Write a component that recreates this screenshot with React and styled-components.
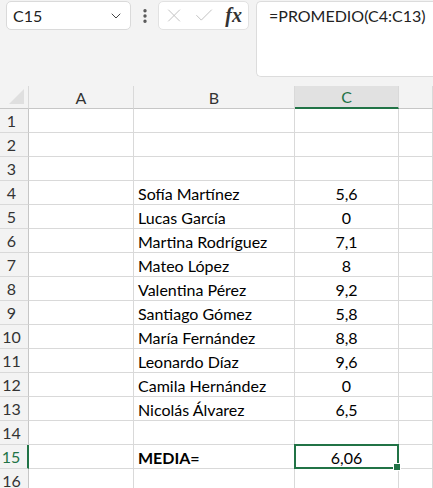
import React from "react";
import styled, { createGlobalStyle } from "styled-components";
import { ChevronDown, EllipsisVertical, X, Check } from "lucide-react";

const GlobalStyle = createGlobalStyle`
  * { box-sizing: border-box; }
  html, body { margin: 0; padding: 0; background: #f3f3f3; }
  body { font-family: Lato, "Liberation Sans", sans-serif; color: #000; }
`;

const green = "#217346";
const gridLine = "#d9d9d9";

const Page = styled.div`
  width: 433px;
  height: 488px;
  overflow: hidden;
  background: #f3f3f3;
`;

const Toolbar = styled.div`
  display: flex;
  align-items: flex-start;
  height: 86px;
  padding: 1px 0 0 6px;
`;

const NameBox = styled.div`
  display: flex;
  align-items: center;
  justify-content: space-between;
  width: 125px;
  height: 29px;
  padding: 0 6px 0 6px;
  background: #fff;
  border: 1px solid #dadada;
  border-radius: 5px;
  font-size: 16px;
  color: #222;
`;

const Dots = styled.div`
  display: flex;
  width: 27px;
  height: 29px;
  align-items: center;
  justify-content: center;
  color: #555;
`;

const ActionGroup = styled.div`
  display: flex;
  align-items: center;
  gap: 8px;
  width: 91px;
  height: 29px;
  padding: 0 6px 0 4px;
  background: #fff;
  border: 1px solid #e2e2e2;
  border-radius: 5px;
  color: #bdbdbd;
`;

const Fx = styled.span`
  margin-left: 2px;
  font-family: "Liberation Serif", serif;
  font-style: italic;
  font-weight: bold;
  font-size: 20px;
  color: #333;
`;

const FormulaBox = styled.div`
  flex: 1;
  height: 76px;
  margin-left: 7px;
  padding: 4px 0 0 12px;
  background: #fff;
  border: 1px solid #dcdcdc;
  border-right: none;
  border-radius: 5px 0 0 5px;
  font-size: 16px;
  color: #222;
`;

const Sheet = styled.div`
  display: grid;
  grid-template-columns: 29px 105px 161px 104px 1fr;
  grid-template-rows: 23px;
  grid-auto-rows: 24px;
  background: #fff;
`;

const Corner = styled.div`
  position: relative;
  background: #f3f3f3;
  border-right: 1px solid ${gridLine};
  border-bottom: 1px solid #c6c6c6;

  &::after {
    content: "";
    position: absolute;
    right: 4px;
    bottom: 4px;
    border-left: 15px solid transparent;
    border-bottom: 15px solid #dfdfdf;
  }
`;

const ColHead = styled.div`
  display: flex;
  align-items: center;
  justify-content: center;
  background: ${(p) => (p.$active ? "#e1e1e1" : "#f3f3f3")};
  color: ${(p) => (p.$active ? green : "#333")};
  border-right: 1px solid ${gridLine};
  border-bottom: ${(p) => (p.$active ? `2px solid ${green}` : "1px solid #c6c6c6")};
  font-size: 16px;
`;

const RowHead = styled.div`
  display: flex;
  align-items: center;
  justify-content: center;
  padding-right: 5px;
  background: #f3f3f3;
  color: ${(p) => (p.$active ? green : "#333")};
  border-right: ${(p) => (p.$active ? `2px solid ${green}` : "1px solid #c6c6c6")};
  border-bottom: 1px solid ${gridLine};
  font-size: 16px;
`;

const Cell = styled.div`
  position: relative;
  display: flex;
  align-items: center;
  justify-content: ${(p) => (p.$center ? "center" : "flex-start")};
  padding: 2px 4px 0;
  border-right: 1px solid ${gridLine};
  border-bottom: 1px solid ${gridLine};
  font-size: 16px;
  font-weight: ${(p) => (p.$bold ? 700 : 400)};
  white-space: nowrap;

  ${(p) =>
    p.$selected &&
    `
    &::after {
      content: "";
      position: absolute;
      left: -1px;
      top: -1px;
      right: -1px;
      bottom: -1px;
      border: 2px solid ${green};
    }
    &::before {
      content: "";
      position: absolute;
      right: -3px;
      bottom: -3px;
      width: 6px;
      height: 6px;
      background: ${green};
      border: 1px solid #fff;
      z-index: 1;
    }
  `}
`;

const rows = [
  [],
  [],
  [],
  ["Sofía Martínez", "5,6"],
  ["Lucas García", "0"],
  ["Martina Rodríguez", "7,1"],
  ["Mateo López", "8"],
  ["Valentina Pérez", "9,2"],
  ["Santiago Gómez", "5,8"],
  ["María Fernández", "8,8"],
  ["Leonardo Díaz", "9,6"],
  ["Camila Hernández", "0"],
  ["Nicolás Álvarez", "6,5"],
  [],
  ["MEDIA=", "6,06", true],
  [],
];

export default function App() {
  return (
    <Page>
      <GlobalStyle />
      <Toolbar>
        <NameBox>
          <span>C15</span>
          <ChevronDown size={16} strokeWidth={1.5} color="#444" />
        </NameBox>
        <Dots>
          <EllipsisVertical size={18} strokeWidth={2.5} />
        </Dots>
        <ActionGroup>
          <X size={25} strokeWidth={1} />
          <Check size={25} strokeWidth={1} />
          <Fx>fx</Fx>
        </ActionGroup>
        <FormulaBox>=PROMEDIO(C4:C13)</FormulaBox>
      </Toolbar>
      <Sheet>
        <Corner />
        <ColHead>A</ColHead>
        <ColHead>B</ColHead>
        <ColHead $active>C</ColHead>
        <ColHead />
        {rows.map(([name, value, total], i) => (
          <React.Fragment key={i}>
            <RowHead $active={i === 14}>{i + 1}</RowHead>
            <Cell />
            <Cell $bold={total}>{name}</Cell>
            <Cell $center $selected={i === 14}>
              {value}
            </Cell>
            <Cell />
          </React.Fragment>
        ))}
      </Sheet>
    </Page>
  );
}
